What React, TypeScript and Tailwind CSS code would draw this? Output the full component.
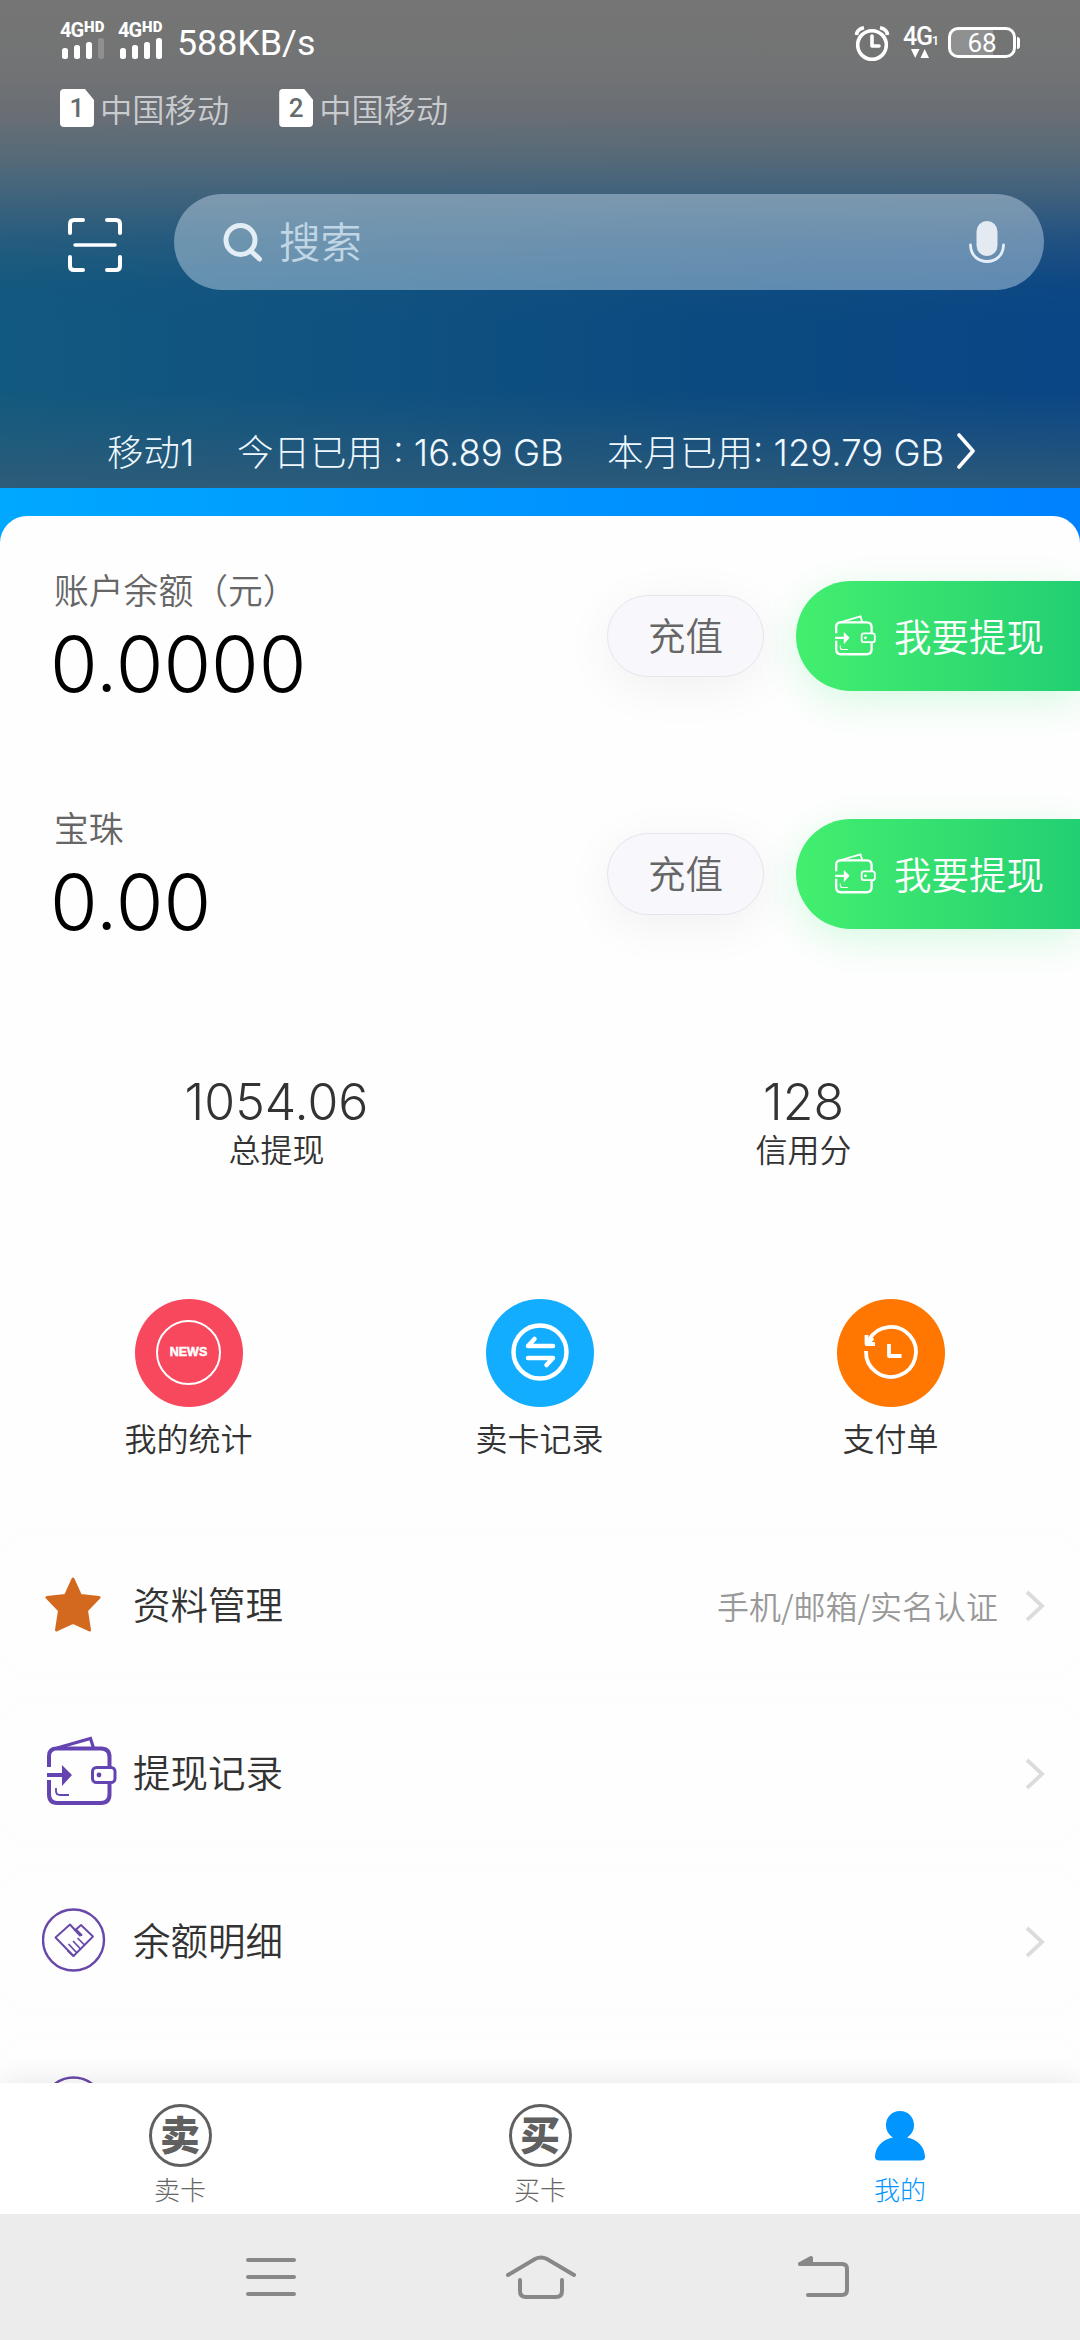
import React from 'react';

interface IconProps {
  className?: string;
}

const WalletIcon: React.FC<IconProps> = ({ className }) => (
  <svg className={className} viewBox="0 0 70 70" fill="none" stroke="currentColor" strokeWidth="4">
    <path d="M2 31V20Q2 12.500 10 12.500H54Q62.500 12.500 62.500 21V31" />
    <path d="M2 44V58Q2 67 10 67H54Q62.500 67 62.500 58V48" />
    <path d="M10 12L43.500 2.500L46.500 12" strokeWidth="3.200" />
    <rect x="45.500" y="31.500" width="22.500" height="15" rx="4" strokeWidth="3" />
    <circle cx="52" cy="39" r="2.400" fill="currentColor" stroke="none" />
    <path d="M0 37H15V29L25 39L15 50V41H0Z" fill="currentColor" stroke="none" />
    <path d="M9 52V55Q9 59 13 59H22" strokeWidth="1.800" />
  </svg>
);

const HandshakeIcon: React.FC<IconProps> = ({ className }) => (
  <svg className={className} viewBox="0 0 64 64" fill="none" stroke="currentColor" strokeWidth="2.400" strokeLinejoin="round" strokeLinecap="round">
    <circle cx="31.500" cy="32" r="30.500" />
    <path d="M26 43L31.500 48L51 28.500L39 17L34 21.500L39.500 27" strokeWidth="1.900" />
    <path d="M31.500 48L13.500 29.500L28 16.500L38 27.500M34 21.500L32.500 22" strokeWidth="1.900" />
    <path d="M27 36.500L34.500 44.500M31.500 33.500L38.500 41M36 30.500L42.500 37" strokeWidth="1.700" />
  </svg>
);

const StarIcon: React.FC<IconProps> = ({ className }) => (
  <svg className={className} viewBox="0 0 56 56" fill="currentColor" stroke="currentColor" strokeWidth="3" strokeLinejoin="round">
    <path d="M28 2L35.500 18.500L54 20.500L41.500 33.500L44.500 53L28 45.500L11.500 53L14.500 33.500L2 20.500L20.500 18.500Z" />
  </svg>
);

const ChevronIcon: React.FC<IconProps> = ({ className }) => (
  <svg className={className} viewBox="0 0 20 32" fill="none" stroke="currentColor" strokeWidth="3.800">
    <path d="M2 2L17 16L2 30" />
  </svg>
);

const SignalBars: React.FC<{ weak?: boolean }> = ({ weak }) => (
  <div className="w-[47px]">
    <div className="flex h-4 items-start leading-none text-white">
      <span className="font-['Roboto'] text-[20px] leading-[17px] font-bold tracking-tighter">4G</span>
      <span className="ml-[1px] font-['Roboto'] text-[15px] leading-[11px] font-black">HD</span>
    </div>
    <svg className="block h-[22px] w-[47px]" viewBox="0 0 47 22">
      <rect x="2" y="10" width="6" height="11" rx="2.500" fill="#fff" />
      <rect x="14" y="7" width="6" height="14" rx="2.500" fill="#fff" />
      <rect x="26" y="4" width="6" height="17" rx="2.500" fill="#fff" />
      <rect x="38" y="0" width="6" height="21" rx="2.500" fill={weak ? '#8f8f8f' : '#fff'} />
    </svg>
  </div>
);

const StatusBar: React.FC = () => (
  <div className="flex h-[82px] items-start pt-[22px] pr-[60px] pl-[60px] text-white">
    <SignalBars weak />
    <div className="ml-[11px]">
      <SignalBars />
    </div>
    <span className="mt-[3px] ml-[12px] font-['Roboto'] text-[35.800px] leading-[36px]">588KB/s</span>
    <svg className="mt-1 ml-auto h-[36px] w-[36px]" viewBox="0 0 36 36" fill="none" stroke="#fff">
      <circle cx="18" cy="19" r="14.300" strokeWidth="3.600" />
      <path d="M18 10V20H25" strokeWidth="3.600" strokeLinecap="round" strokeLinejoin="round" />
      <path d="M2.500 9Q3 3 10 1.800M33.500 9Q33 3 26 1.800" strokeWidth="3.600" />
    </svg>
    <div className="mt-[4px] ml-[13px] w-[34px]">
      <div className="flex items-end">
        <span className="font-['Roboto'] text-[25px] leading-[21px] font-medium tracking-tighter">4G</span>
        <span className="font-['Roboto'] text-[13px] leading-[12px] font-medium">1</span>
      </div>
      <svg className="mt-[2px] ml-[8px] block h-[9px] w-[18px]" viewBox="0 0 18 9" fill="#fff">
        <path d="M0 0H8.500L4.200 9ZM9.500 9L13.700 0L18 9Z" />
      </svg>
    </div>
    <div className="mt-[5px] ml-[11px] flex items-center">
      <div className="flex h-[31px] w-[68px] items-center justify-center rounded-[10px] border-[3.5px] border-white bg-linear-to-r from-white/20 from-68% to-transparent to-68% font-['Roboto'] text-[26px] leading-none">
        68
      </div>
      <div className="ml-px h-3 w-[3px] rounded-r bg-white" />
    </div>
  </div>
);

const SimLabel: React.FC<{ slot: string }> = ({ slot }) => (
  <div className="flex items-center">
    <div className="flex h-[38px] w-[34px] items-center justify-center rounded-[4px] bg-white font-['Roboto'] text-[26px] font-medium text-[#666b6e] [clip-path:polygon(0_0,25px_0,100%_11px,100%_100%,0_100%)]">
      {slot}
    </div>
    <span className="ml-[6px] text-[32.300px] leading-none font-[350] text-[#c9ccce]">中国移动</span>
  </div>
);

const Header: React.FC = () => (
  <header className="h-[488px] bg-[linear-gradient(to_bottom,rgba(117,117,117,1)_0px,rgba(114,115,116,1)_70px,rgba(105,110,116,1)_115px,rgba(88,107,120,0.95)_160px,rgba(75,102,124,0.82)_195px,rgba(60,96,124,0.45)_240px,rgba(30,85,125,0.15)_285px,rgba(20,80,125,0)_320px,rgba(50,90,120,0)_390px,rgba(50,94,120,0.4)_440px,rgba(50,92,118,0.85)_488px),linear-gradient(to_right,#12597f_0%,#0f5180_35%,#0b4a80_65%,#0a4585_100%)]">
    <StatusBar />
    <div className="flex gap-[50px] pt-[7px] pl-[60px]">
      <SimLabel slot="1" />
      <SimLabel slot="2" />
    </div>
    <div className="mt-[67px] flex h-[96px] items-center pr-[36px] pl-[68px]">
      <svg className="mt-[6px] h-[54px] w-[54px]" viewBox="0 0 54 54" fill="none" stroke="#fff" strokeWidth="4" strokeLinecap="round">
        <path d="M2 15V6Q2 2 6 2H15M39 2H48Q52 2 52 6V15M52 39V48Q52 52 48 52H39M15 52H6Q2 52 2 48V39" />
        <path d="M7 27H47" strokeWidth="3.500" />
      </svg>
      <div className="ml-[52px] flex h-[96px] flex-1 items-center rounded-full bg-[#c8dceb]/45 pr-[39px] pl-[49px]">
        <svg className="h-[40px] w-[40px]" viewBox="0 0 40 40" fill="none" stroke="#e3edf5" strokeLinecap="round">
          <circle cx="17.500" cy="18" r="14.500" strokeWidth="5" />
          <path d="M28 29L36.500 37" strokeWidth="5" />
        </svg>
        <span className="mb-[2px] ml-[16px] text-[41.500px] leading-none font-[350] text-[#c0d6e5]">搜索</span>
        <svg className="ml-auto h-[44px] w-[36px]" viewBox="0 0 36 44">
          <rect x="7.500" y="1" width="21" height="35" rx="10.500" fill="#e4eaf2" />
          <path d="M1.500 25C2 47 34 47 34.500 25" fill="none" stroke="#e4eef8" strokeWidth="2.800" strokeLinecap="round" />
        </svg>
      </div>
    </div>
    <div className="mt-[142px] flex h-[42px] items-center pl-[107px] font-['Inter','Noto_Sans_CJK_SC',sans-serif] text-[36.500px] leading-none font-light whitespace-pre text-[#f0f8ff]">
      <span className="mt-px w-[130px]">移动1</span>
      <span className="mt-px w-[370px]">今日已用 : 16.89 GB</span>
      <span className="mt-px">本月已用: 129.79 GB</span>
      <svg className="-mt-[4px] ml-[13px] h-[36px] w-[20px]" viewBox="0 0 20 36" fill="none" stroke="#fff" strokeWidth="3.600" strokeLinecap="round" strokeLinejoin="round">
        <path d="M2 2L16 18L2 34" />
      </svg>
    </div>
  </header>
);

const BalanceRow: React.FC<{ label: string; value: string }> = ({ label, value }) => (
  <div className="flex h-[238px] items-start">
    <div className="pl-[54px]">
      <p className="mt-[55px] text-[34.800px] leading-[36px] font-[350] text-[#666]">{label}</p>
      <p className="mt-[19px] -ml-[4px] font-['Inter','Noto_Sans_CJK_SC',sans-serif] text-[77.300px] leading-[76px] font-light text-black">{value}</p>
    </div>
    <button className="mt-[79px] ml-auto h-[82px] w-[157px] rounded-full border border-[#e4e4ec] bg-[#f8f8fc] pb-[5px] text-[37.500px] leading-none font-[350] text-[#666] shadow-[0_10px_50px_rgba(0,0,0,0.06)]">
      充值
    </button>
    <button className="mt-[65px] ml-[32px] flex h-[110px] w-[284px] items-center rounded-l-full bg-linear-to-r from-[#43ef6e] to-[#22cf72] pl-[39px] text-white shadow-[0_10px_40px_rgba(67,233,123,0.22)]">
      <WalletIcon className="-mt-[2px] h-[41px] w-[41px]" />
      <span className="mb-[3px] ml-[18px] text-[37.500px] leading-none font-[350]">我要提现</span>
    </button>
  </div>
);

const Stat: React.FC<{ value: string; label: string }> = ({ value, label }) => (
  <div className="flex w-[527px] flex-col items-center text-[#333]">
    <span className="font-['Inter','Noto_Sans_CJK_SC',sans-serif] text-[50px] leading-[50px] font-light">{value}</span>
    <span className="mt-[3px] text-[32px] leading-[36px] font-[350]">{label}</span>
  </div>
);

const Shortcut: React.FC<{ label: string; color: string; children: React.ReactNode }> = ({ label, color, children }) => (
  <div className="flex w-[351px] flex-col items-center">
    <div className={`flex h-[108px] w-[108px] items-center justify-center rounded-full ${color}`}>{children}</div>
    <span className="mt-[12px] text-[32px] leading-[36px] font-[350] text-[#333]">{label}</span>
  </div>
);

const MenuRow: React.FC<{ label: string; hint?: string; children: React.ReactNode }> = ({ label, hint, children }) => (
  <div className="mb-[32px] flex h-[136px] items-center rounded-[30px] bg-[#fefefe] pt-[2px] pr-[35px] pl-[42px] shadow-[0_0_30px_rgba(0,0,0,0.014)]">
    <div className="flex w-[62px] items-center">{children}</div>
    <span className="mb-[4px] ml-[29px] text-[37.500px] leading-none font-[350] text-[#333]">{label}</span>
    {hint && <span className="mr-[27px] ml-auto text-[32px] leading-none font-[350] text-[#999]">{hint}</span>}
    <ChevronIcon className={`mt-[2px] h-[32px] w-[20px] text-[#dcdcdc] ${hint ? '' : 'ml-auto'}`} />
  </div>
);

const TabItem: React.FC<{ label: string; active?: boolean; children: React.ReactNode }> = ({ label, active, children }) => (
  <div className={`flex flex-1 flex-col items-center pt-[21px] ${active ? 'text-[#0095ff]' : 'text-[#666]'}`}>
    <div className="flex h-[63px] items-center">{children}</div>
    <span className="mt-[8px] text-[26px] leading-[28px] font-light">{label}</span>
  </div>
);

const CharBadge: React.FC<{ char: string }> = ({ char }) => (
  <div className="flex h-[63px] w-[63px] items-center justify-center rounded-full border-[3px] border-[#606060] pb-[5px] text-[40px] leading-none font-black text-[#606060]">
    {char}
  </div>
);

const App: React.FC = () => {
  return (
    <div className="flex h-[2340px] w-[1080px] flex-col overflow-hidden bg-[linear-gradient(to_right,#00a8ff,#0081ff)] font-['Noto_Sans_CJK_SC',sans-serif]">
      <Header />
      <main className="mt-[28px] h-[1567px] shrink-0 overflow-hidden rounded-t-[27px] bg-[#fefefe]">
        <section className="h-[490px]">
          <BalanceRow label="账户余额（元）" value="0.0000" />
          <BalanceRow label="宝珠" value="0.00" />
        </section>
        <section className="flex h-[202px] rounded-[30px] pt-[71px] pl-[13px] shadow-[0_0_30px_rgba(0,0,0,0.008)]">
          <Stat value="1054.06" label="总提现" />
          <Stat value="128" label="信用分" />
        </section>
        <section className="mt-[30px] mb-[32px] flex h-[266px] rounded-[30px] pt-[61px] pl-[13px] shadow-[0_0_30px_rgba(0,0,0,0.008)]">
          <Shortcut label="我的统计" color="bg-[#f8485e]">
            <div className="mb-[2px] flex h-[65px] w-[65px] items-center justify-center rounded-full border-2 border-white font-['Liberation_Sans'] text-[12.500px] font-bold text-white [-webkit-text-stroke:0.5px_white]">
              NEWS
            </div>
          </Shortcut>
          <Shortcut label="卖卡记录" color="bg-[#12adff]">
            <svg className="mb-[3px] h-[60px] w-[60px]" viewBox="0 0 60 60" fill="none" stroke="#fff" strokeWidth="4.500" strokeLinecap="round" strokeLinejoin="round">
              <circle cx="30" cy="30" r="26.500" />
              <path d="M43 24H18L24.500 17M18 36H43L36.500 43" />
            </svg>
          </Shortcut>
          <Shortcut label="支付单" color="bg-[#ff7600]">
            <svg className="mb-[3px] h-[60px] w-[60px]" viewBox="0 0 60 60" fill="none" stroke="#fff" strokeWidth="3.800">
              <path d="M5 29A25 25 0 1 0 8 18" />
              <path d="M28 22V34H40.500M5.500 13V22H14M7.500 20L12 16" strokeLinejoin="round" />
            </svg>
          </Shortcut>
        </section>
        <MenuRow label="资料管理" hint="手机/邮箱/实名认证">
          <StarIcon className="ml-[3px] h-[56px] w-[56px] text-[#d2691e]" />
        </MenuRow>
        <MenuRow label="提现记录">
          <WalletIcon className="-mt-[4px] ml-[5px] h-[70px] w-[70px] shrink-0 text-[#6444b0]" />
        </MenuRow>
        <MenuRow label="余额明细">
          <HandshakeIcon className="-mt-[2px] h-[64px] w-[64px] shrink-0 text-[#6848a8]" />
        </MenuRow>
        <MenuRow label="">
          <HandshakeIcon className="-mt-[2px] h-[64px] w-[64px] shrink-0 text-[#6848a8]" />
        </MenuRow>
      </main>
      <nav className="z-10 flex h-[131px] shrink-0 bg-white shadow-[0_-2px_28px_rgba(0,0,0,0.09)]">
        <TabItem label="卖卡">
          <CharBadge char="卖" />
        </TabItem>
        <TabItem label="买卡">
          <CharBadge char="买" />
        </TabItem>
        <TabItem label="我的" active>
          <svg className="h-[50px] w-[50px]" viewBox="0 0 50 50" fill="currentColor">
            <path d="M25 0C16 0 11 7 11 14C11 20 14 24 18 26.500C7 28 0 37 0 46Q0 49.500 5 49.500H45Q50 49.500 50 46C50 37 43 28 32 26.500C36 24 39 20 39 14C39 7 34 0 25 0Z" />
          </svg>
        </TabItem>
      </nav>
      <footer className="z-20 flex h-[126px] shrink-0 items-center bg-[#ececec] pl-[246px] text-[#888]">
        <svg className="h-[42px] w-[50px]" viewBox="0 0 50 42" stroke="currentColor" strokeWidth="4" strokeLinecap="round">
          <path d="M2 4H48M2 21H48M2 38H48" />
        </svg>
        <svg className="ml-[210px] h-[44px] w-[70px]" viewBox="0 0 70 44" fill="none" stroke="currentColor" strokeWidth="4" strokeLinecap="round">
          <path d="M2 20L29 4Q35 1 41 4L68 20M14 25V36Q14 42 20 42H50Q56 42 56 36V25" />
        </svg>
        <svg className="ml-[222px] h-[42px] w-[52px]" viewBox="0 0 52 42" fill="none" stroke="currentColor" strokeWidth="4" strokeLinecap="round" strokeLinejoin="round">
          <path d="M2 8H44Q49 8 49 13V34Q49 39 44 39H10" />
          <path d="M2 8L13 2V8Z" fill="currentColor" />
        </svg>
      </footer>
    </div>
  );
};

export default App;
